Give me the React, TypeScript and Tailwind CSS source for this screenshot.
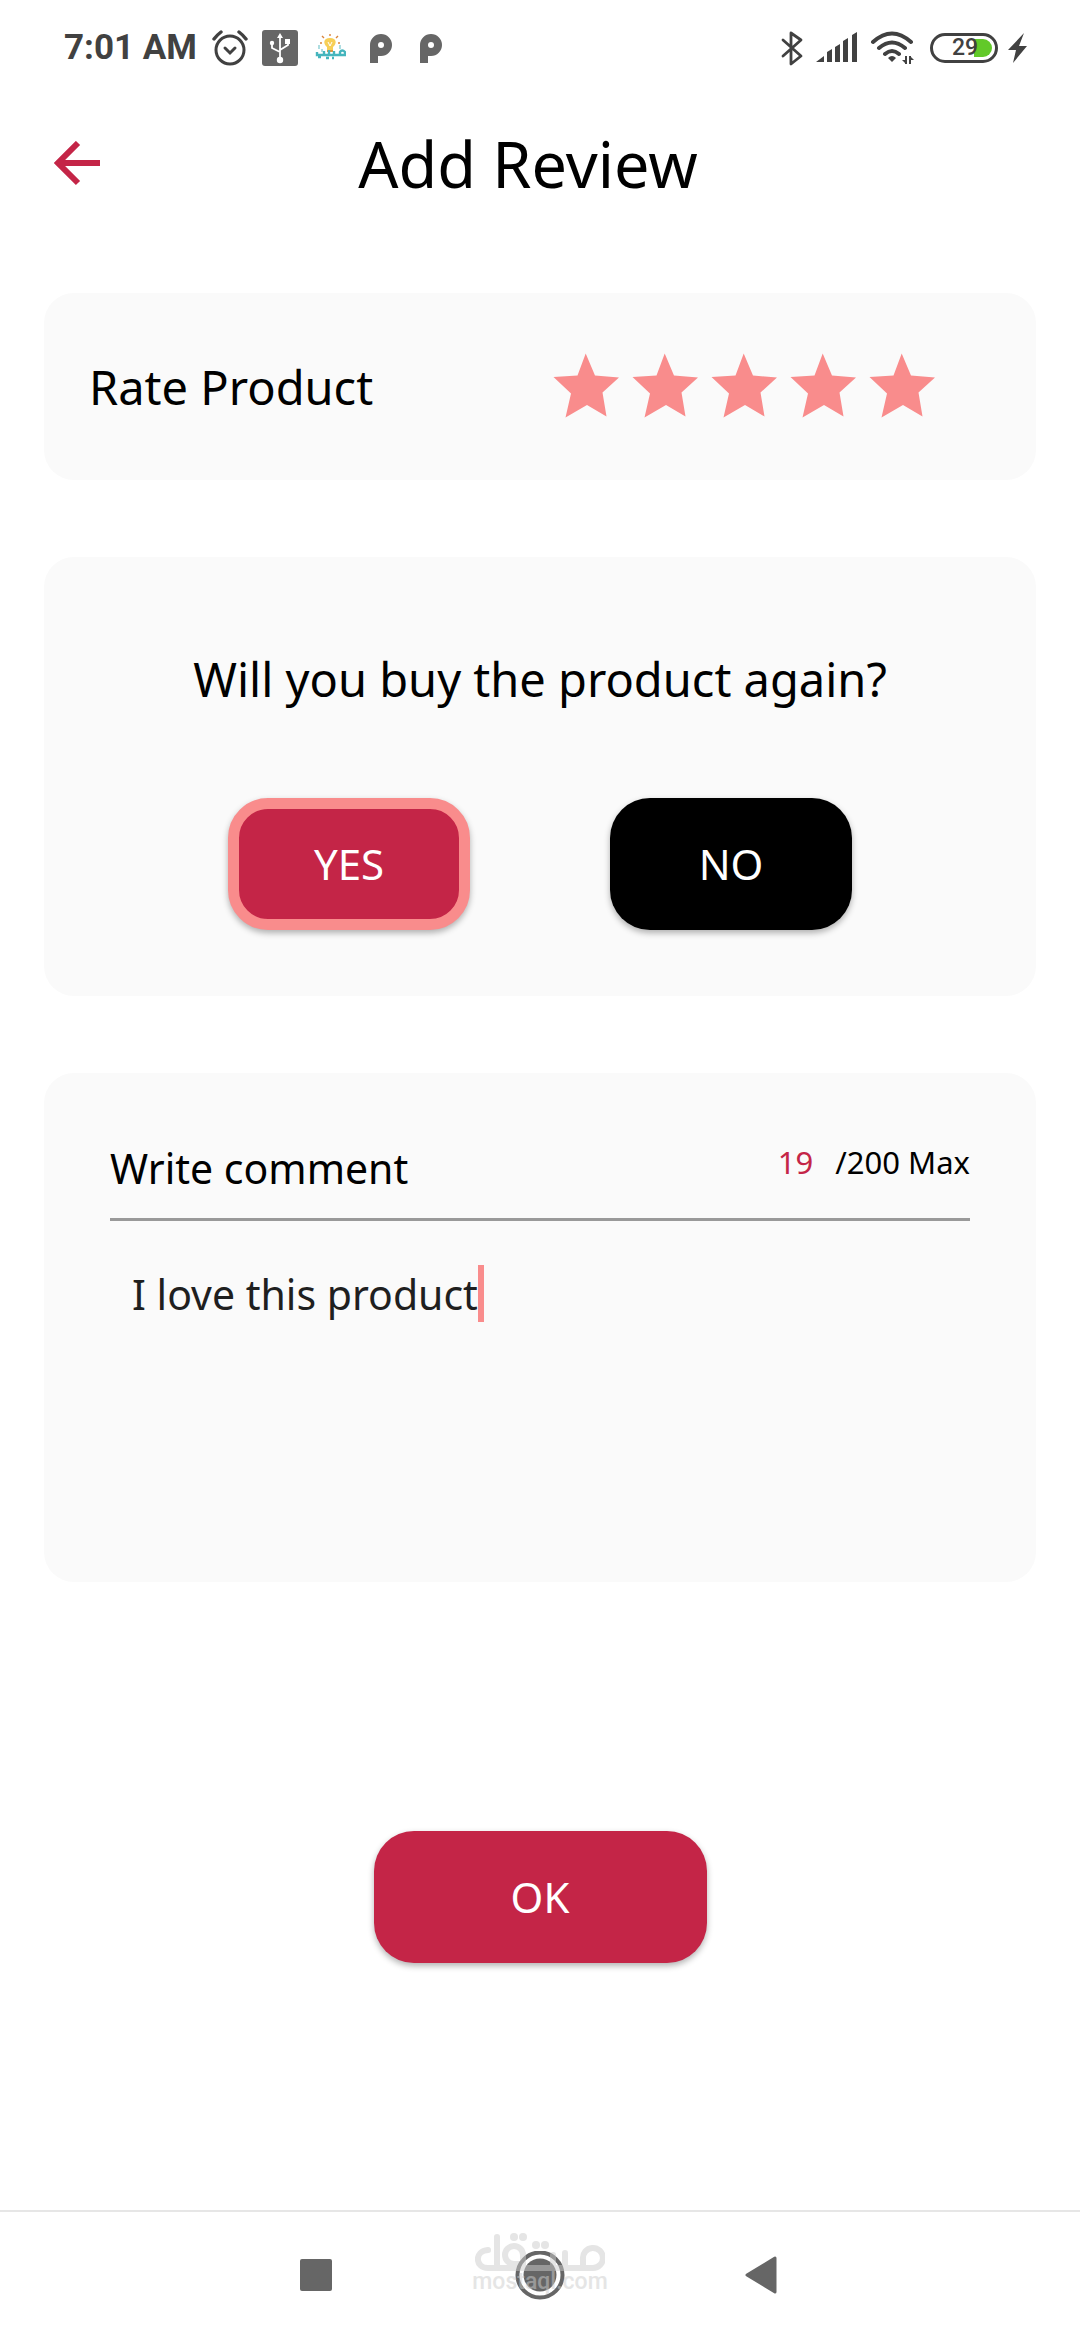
import {useState} from "react";
import type {ReactNode} from "react";

const MAX_LENGTH = 200;

function StatusBar() {
    return (
        <div className="flex h-24 items-center justify-between pl-16 pr-[52px] text-[#414141]">
            <div className="flex items-center">
                <span className="w-[132px] whitespace-nowrap font-[Roboto,sans-serif] text-[35px] leading-10 font-bold">7:01 AM</span>
                <svg className="ml-4 h-9 w-9" viewBox="0 0 36 36" fill="none" stroke="currentColor" strokeWidth="3" strokeLinecap="round">
                    <circle cx="18" cy="20" r="14"/>
                    <path d="M2 9 Q5 5 9 2 M34 9 Q31 5 27 2" strokeWidth="3.4"/>
                    <path d="M13 18l5 5 5-5"/>
                </svg>
                <svg className="ml-[14px] h-9 w-9" viewBox="0 0 36 36">
                    <rect width="36" height="36" rx="3" fill="#666"/>
                    <path d="M18 7v20M18 22l-8-4v-5M18 20l8-5v-4" fill="none" stroke="#fff" strokeWidth="1.8"/>
                    <path d="M18 3l3 5h-6z" fill="#fff"/>
                    <circle cx="18" cy="30" r="3.2" fill="#fff"/>
                    <circle cx="10" cy="13" r="2.2" fill="#fff"/>
                    <rect x="23" y="9" width="5" height="5" fill="#fff"/>
                </svg>
                <svg className="ml-4 h-8 w-8" viewBox="0 0 32 32" fill="none">
                    <path d="M16 6c-7 0-7 6-3 9v5h6v-5c4-3 4-9-3-9z" fill="#f7cf57"/>
                    <path d="M14 10l2 4 2-4" stroke="#fff" strokeWidth="1"/>
                    <path d="M16 4V2M10 6L8 4M22 6l2-2M8 11H6M24 11h2M13 19h6" stroke="#d9843b" strokeWidth="1.4"/>
                    <path d="M5 17v-4M26 17v-4M8 20v-3" stroke="#8ccfd4" strokeWidth="1.4"/>
                    <path d="M3 20v3h7v-4M10 23h5v-5M15 23h5v-4M20 23h11v-3q-3-3-5 0v3M4 25h3M12 26h3M18 26h2" stroke="#45b5bd" strokeWidth="2.4"/>
                </svg>
                <ParkingIcon/>
                <ParkingIcon/>
            </div>
            <div className="flex items-center">
                <svg className="h-9 w-6" viewBox="0 0 24 36" fill="none" stroke="currentColor" strokeWidth="2.8" strokeLinejoin="round" strokeLinecap="round">
                    <path d="M3 10l18 16-10 8V3l10 7L3 26"/>
                </svg>
                <svg className="ml-3 h-8 w-[42px]" viewBox="0 0 42 32" fill="currentColor">
                    <path d="M0 30l8-6v6zM11 20l5-3v13h-5zM19 15l5-3v18h-5zM27 9l5-3v24h-5zM36 3l5-3v30h-5z"/>
                </svg>
                <svg className="ml-3 h-9 w-11" viewBox="0 0 44 36" fill="none" stroke="currentColor" strokeWidth="4" strokeLinecap="round">
                    <path d="M3 12Q22-5 41 12M9 18Q22 7 35 18M15 24Q22 18 29 24"/>
                    <path d="M18 28q4-4 8 0l-4 4z" fill="currentColor" strokeWidth="0"/>
                    <path d="M36 26v8M40 26v8" strokeWidth="2" strokeLinecap="butt"/>
                    <path d="M36 34l-4-4h4zM40 30h4l-4-4z" fill="currentColor" strokeWidth="0"/>
                </svg>
                <div className="relative ml-4 flex h-[30px] w-[68px] items-center rounded-full border-3 border-current">
                    <span className="absolute right-[3px] h-[18px] w-[18px] rounded-r-full bg-[#62c929]"/>
                    <span className="relative ml-[19px] font-[Roboto,sans-serif] text-[23px] leading-6 font-medium">29</span>
                </div>
                <svg className="ml-[10px] h-8 w-5" viewBox="0 0 20 32" fill="currentColor">
                    <path d="M16 1L0 18h8L5 31l14-17h-8z"/>
                </svg>
            </div>
        </div>
    )
}

function ParkingIcon() {
    return (
        <svg className="ml-6 h-[30px] w-[26px]" viewBox="0 0 26 30">
            <path d="M0 30V12a11 11 0 1 1 11 11H8v7z" fill="#666"/>
            <circle cx="11" cy="12" r="3" fill="#fff"/>
        </svg>
    )
}

function Star({filled}: {filled: boolean}) {
    return (
        <svg className="h-[67px] w-[67px]" viewBox="3 8 67 67" fill={filled ? "#f98c8c" : "#dddddd"}>
            <path d="M35.700 8.500L45 30.500L69 32.500L52.500 47.500L56.500 71.500L37 60L15.500 72.500L21 48.500L3.500 32L27.500 30.500Z"/>
        </svg>
    )
}

function Card({children, className}: {children: ReactNode; className: string}) {
    return <section className={`rounded-[30px] bg-[#fafafa] ${className}`}>{children}</section>
}

function NavBar() {
    return (
        <nav className="relative mt-auto flex h-[130px] items-center justify-center gap-[169px] border-t-2 border-[#e6e6e6] text-[#666]">
            <button aria-label="Recent apps">
                <svg className="h-12 w-12" viewBox="0 0 48 48" fill="currentColor">
                    <rect x="2" y="7" width="32" height="32" rx="2"/>
                </svg>
            </button>
            <button aria-label="Home">
                <svg className="h-[50px] w-[50px]" viewBox="0 0 50 50">
                    <circle cx="25" cy="24" r="22.500" fill="none" stroke="currentColor" strokeWidth="4"/>
                    <circle cx="25" cy="24" r="16.500" fill="currentColor"/>
                </svg>
            </button>
            <button aria-label="Back">
                <svg className="h-12 w-12" viewBox="0 0 48 48" fill="currentColor" stroke="currentColor" strokeWidth="3" strokeLinejoin="round">
                    <path d="M13 23L41 6v34z"/>
                </svg>
            </button>
            <Watermark/>
        </nav>
    )
}

function Watermark() {
    return (
        <div className="pointer-events-none absolute inset-x-0 top-5 flex flex-col items-center text-[#cccccc] opacity-50">
            <svg className="h-10 w-[130px]" viewBox="0 0 130 40" fill="none" stroke="currentColor" strokeWidth="6" strokeLinecap="round" strokeLinejoin="round">
                <path d="M13 18C-1 19 0 36 13 36H22V5M22 36H108M48 36V23a9 9 0 1 0-9 9h9M78 36V23M90 36V21M108 36V27a10 10 0 1 1 10 9h-10"/>
                <g fill="currentColor" stroke="none">
                    <circle cx="39" cy="5" r="4"/>
                    <circle cx="48" cy="5" r="4"/>
                    <circle cx="61" cy="13" r="4"/>
                    <circle cx="70" cy="13" r="4"/>
                </g>
            </svg>
            <span className="font-[Roboto,sans-serif] text-[23px] leading-5 font-medium">mostaql.com</span>
        </div>
    )
}

const buttonClass = "h-[132px] rounded-[40px] text-[42px] leading-[56px] text-white shadow-[0_3px_6px_rgba(0,0,0,0.3)]";

export default function App() {
    const [rating, setRating] = useState(5);
    const [buyAgain, setBuyAgain] = useState(true);
    const [comment, setComment] = useState("I love this product");

    return (
        <div className="flex min-h-screen flex-col bg-white font-['Noto_Sans',sans-serif] text-black">
            <StatusBar/>
            <header className="flex h-[136px] items-center justify-center pr-6">
                <button aria-label="Go back" className="absolute left-[54px]">
                    <svg className="h-[46px] w-[46px]" viewBox="0 0 46 46" fill="none" stroke="#c42547" strokeWidth="6">
                        <path d="M46 22H5M24 2L4 22l20 20"/>
                    </svg>
                </button>
                <h1 className="text-[63px] leading-[84px]">Add Review</h1>
            </header>

            <main className="mt-[61px] flex flex-col gap-[77px] px-11">
                <Card className="flex h-[187px] items-center justify-between pl-[45px] pr-[100px]">
                    <h2 className="text-[47px] leading-[64px]">Rate Product</h2>
                    <div className="flex gap-3">
                        {[1, 2, 3, 4, 5].map((value) => (
                            <button key={value} aria-label={`${value} stars`} onClick={() => setRating(value)}>
                                <Star filled={value <= rating}/>
                            </button>
                        ))}
                    </div>
                </Card>

                <Card className="flex h-[439px] flex-col items-center pt-[90px]">
                    <h2 className="text-[47px] leading-[64px]">Will you buy the product again?</h2>
                    <div className="mt-[87px] flex gap-[140px]">
                        <button onClick={() => setBuyAgain(true)}
                                className={`w-[242px] bg-[#c42547] ${buttonClass} ${buyAgain ? "border-[11px] border-[#f98c8c]" : ""}`}>
                            YES
                        </button>
                        <button onClick={() => setBuyAgain(false)}
                                className={`w-[242px] bg-black ${buttonClass} ${buyAgain ? "" : "border-[11px] border-[#f98c8c]"}`}>
                            NO
                        </button>
                    </div>
                </Card>

                <Card className="h-[509px] px-[66px] pt-[66px]">
                    <div className="flex h-[82px] items-start justify-between border-b-3 border-[#999999]">
                        <label htmlFor="comment" className="text-[41px] leading-[58px]">Write comment</label>
                        <p className="flex gap-[22px] text-[31px] leading-[46px]">
                            <span className="text-[#c42547]">{comment.length}</span>
                            <span>/{MAX_LENGTH} Max</span>
                        </p>
                    </div>
                    <div className="relative mt-[44px] pl-[22px]">
                        <textarea id="comment" autoFocus maxLength={MAX_LENGTH} value={comment}
                                  onChange={(e) => setComment(e.target.value)}
                                  className="block h-[240px] w-full resize-none bg-transparent text-[41px] leading-[58px] text-[#1f1f1f] caret-transparent outline-none"/>
                        {/* wide caret, follows the end of the text */}
                        <div aria-hidden="true" className="pointer-events-none absolute top-0 left-[22px] flex text-[41px] leading-[58px]">
                            <span className="invisible whitespace-pre">{comment}</span>
                            <span className="h-[57px] w-[6px] bg-[#f98c8c]"/>
                        </div>
                    </div>
                </Card>
            </main>

            <button className={`mx-auto mt-[249px] w-[333px] bg-[#c42547] ${buttonClass}`}>OK</button>
            <NavBar/>
        </div>
    )
}
